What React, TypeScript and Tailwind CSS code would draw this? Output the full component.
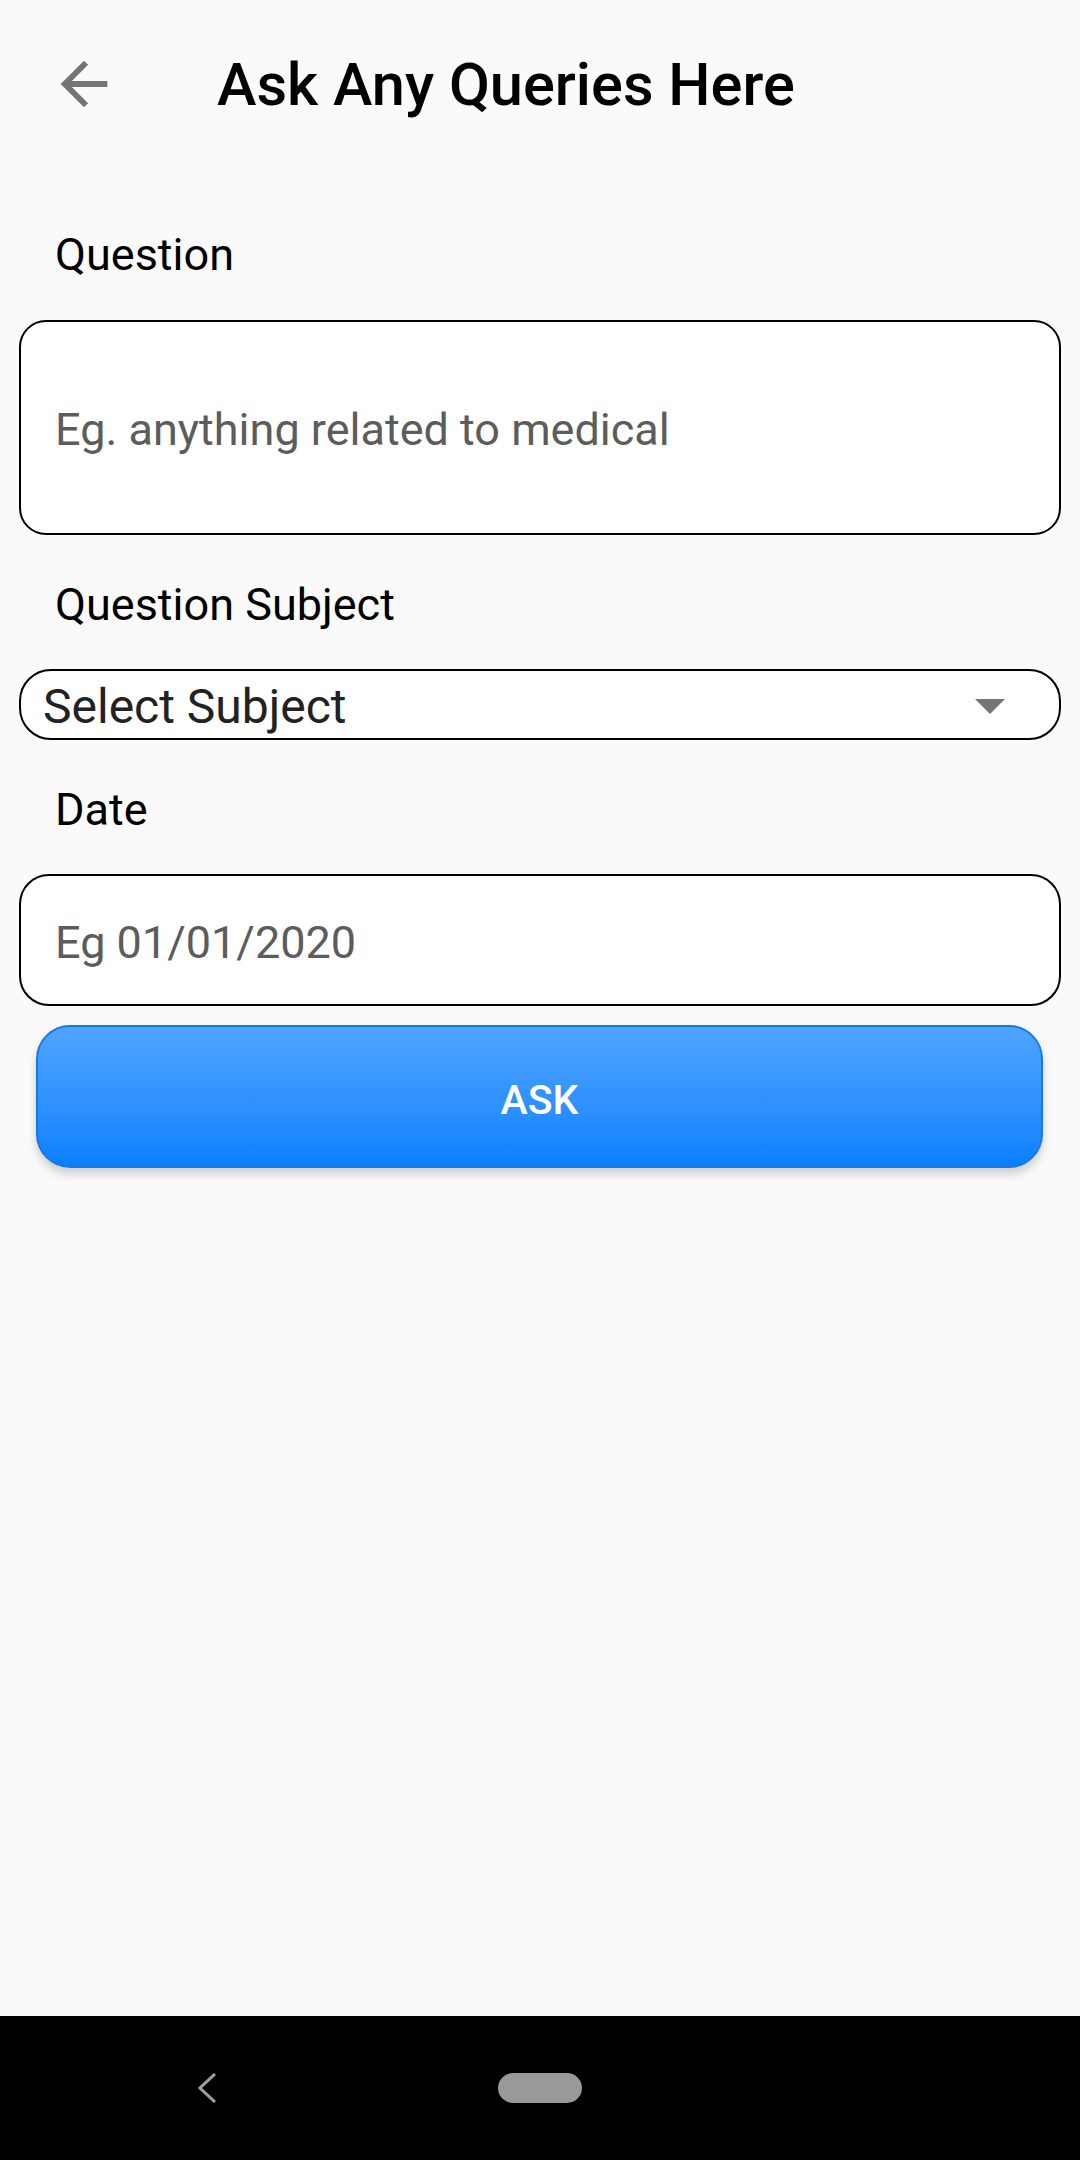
import { FC } from 'react';

const BackArrow: FC = () => (
  <svg width="70" height="70" viewBox="0 0 24 24" className="shrink-0">
    <path d="M20 11H7.83l5.59-5.59L12 4l-8 8 8 8 1.41-1.41L7.83 13H20v-2z" fill="#757575" />
  </svg>
);

const Label: FC<{ text: string; className?: string }> = ({ text, className }) => (
  <div className={`pl-[55px] text-[45px] leading-[50px] text-black ${className ?? ''}`}>{text}</div>
);

const App: FC = () => {
  return (
    <div className="w-[1080px] h-[2160px] flex flex-col bg-[#fafafa] font-['Roboto','Liberation_Sans',sans-serif]">
      {/* form area */}
      <div className="flex-1 flex flex-col">
        <div className="flex items-start pt-[49px] pl-[49px] gap-[98px]">
          <BackArrow />
          <h1 className="mt-[1px] text-[59.5px] leading-[70px] font-medium text-black">Ask Any Queries Here</h1>
        </div>

        <Label text="Question" className="mt-[110px]" />
        <div className="mx-[19px] mt-[40px] h-[215px] rounded-[27px] border-2 border-black bg-white flex items-center pl-[34px] pt-[4px]">
          <span className="text-[45px] leading-[50px] text-[#5c5c5c]">Eg. anything related to medical</span>
        </div>

        <Label text="Question Subject" className="mt-[45px]" />
        <div className="mx-[19px] mt-[39px] h-[71px] rounded-[32px] border-2 border-black bg-white flex items-center justify-between pl-[22px] pr-[54px]">
          <span className="pt-[4px] text-[48px] leading-[56px] text-[#222222]">Select Subject</span>
          <svg width="30" height="15" viewBox="0 0 30 15" className="mt-[4px]">
            <path d="M0 0h30L15 15z" fill="#757575" />
          </svg>
        </div>

        <Label text="Date" className="mt-[45px]" />
        <div className="mx-[19px] mt-[39px] h-[132px] rounded-[30px] border-2 border-black bg-white flex items-center pl-[34px] pt-[6px]">
          <span className="text-[45px] leading-[50px] text-[#5c5c5c]">Eg 01/01/2020</span>
        </div>

        <button className="ml-[36px] mr-[37px] mt-[19px] h-[143px] rounded-[34px] border-2 border-[#1a78e6] bg-gradient-to-b from-[#4ea5ff] to-[#0680ff] shadow-[0_6px_10px_rgba(0,0,0,0.18)] flex items-center justify-center pt-[6px]">
          <span className="text-[41px] leading-[48px] font-medium text-white">ASK</span>
        </button>
      </div>

      {/* system navigation bar */}
      <div className="h-[144px] bg-black flex items-center pl-[198px] gap-[282px]">
        <svg width="18" height="30" viewBox="0 0 18 30">
          <path d="M17 1L2 15l15 14" fill="none" stroke="#9e9e9e" strokeWidth="3" />
        </svg>
        <div className="w-[84px] h-[30px] rounded-full bg-[#999999]" />
      </div>
    </div>
  );
};

export default App;
